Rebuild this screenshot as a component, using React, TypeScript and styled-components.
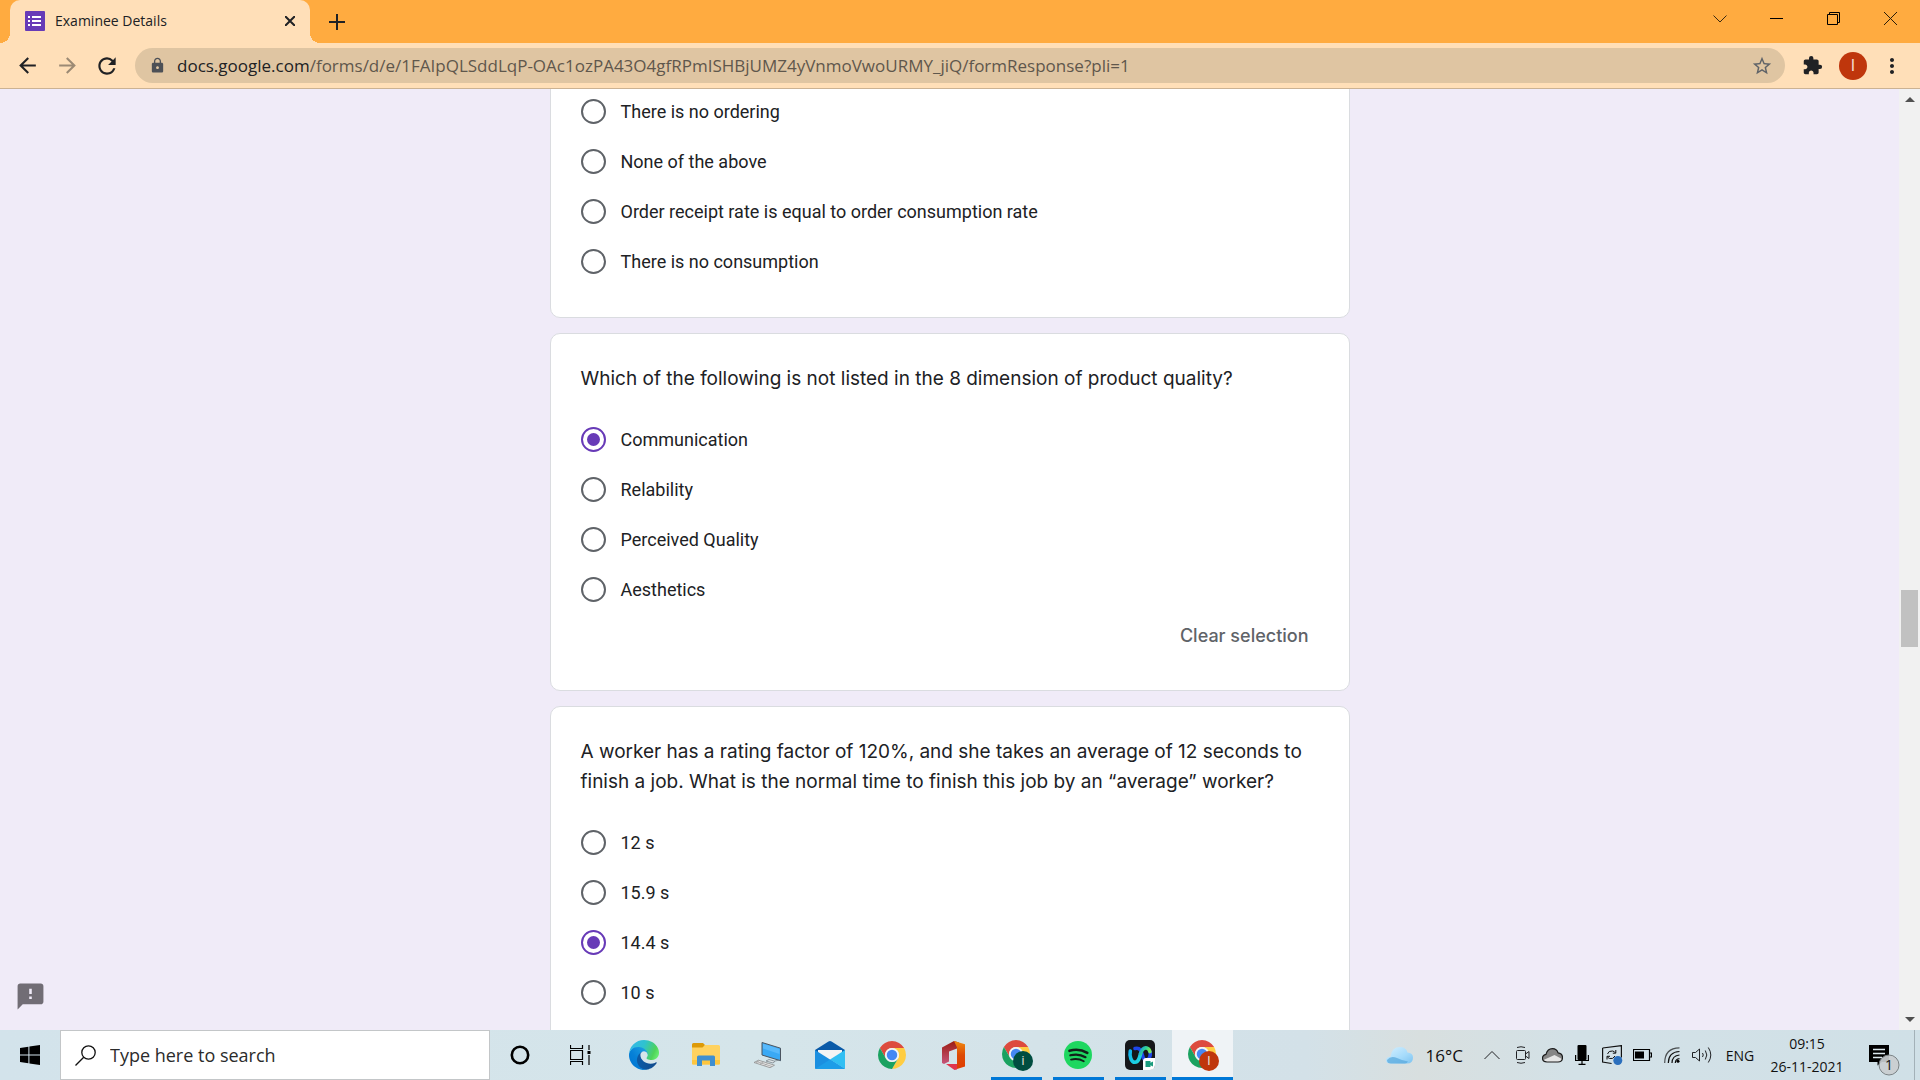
import React, { useState } from "react";
import styled, { createGlobalStyle, css } from "styled-components";
import {
  MdArrowBack,
  MdArrowForward,
  MdExtension,
  MdFeedback,
  MdLock,
  MdMoreVert,
  MdRefresh,
  MdStarBorder,
} from "react-icons/md";

const systemFont = `"Open Sans", "Noto Sans", sans-serif`;
const headingFont = `Inter, "Open Sans", sans-serif`;
const bodyFont = `Roboto, "Liberation Sans", sans-serif`;

const GlobalStyle = createGlobalStyle`
  *, *::before, *::after { box-sizing: border-box; }
  body { margin: 0; font-family: ${systemFont}; color: #202124; overflow: hidden; }
  button { border: 0; padding: 0; background: none; font: inherit; color: inherit; }
  input { font: inherit; color: inherit; margin: 0; }
  svg { display: block; flex: none; }
`;

const Desktop = styled.div`
  height: 100vh;
  display: grid;
  grid-template-rows: auto auto minmax(0, 1fr) auto;
  grid-template-columns: minmax(0, 1fr);
`;

/* Tab strip */

const TabStrip = styled.header`
  display: flex;
  height: 43px;
  padding: 0 1px 0 10px;
  background: #ffab40;
`;

const Tab = styled.div`
  position: relative;
  display: flex;
  align-items: center;
  width: 300px;
  padding: 0 10px 2px 15px;
  gap: 10px;
  border-radius: 10px 10px 0 0;
  background: #ffdfb8;
  font-size: 14px;
  &::before,
  &::after {
    content: "";
    position: absolute;
    bottom: 0;
    width: 10px;
    height: 10px;
  }
  &::before {
    right: 100%;
    background: radial-gradient(circle at 0 0, transparent 10px, #ffdfb8 10px);
  }
  &::after {
    left: 100%;
    background: radial-gradient(circle at 100% 0, transparent 10px, #ffdfb8 10px);
  }
`;

const TabTitle = styled.span`
  flex: 1;
  white-space: nowrap;
`;

const IconButton = styled.button<{ $w: number; $h?: number; $tone?: string }>`
  display: flex;
  align-items: center;
  justify-content: center;
  flex: none;
  width: ${(p) => p.$w}px;
  height: ${(p) => (p.$h ? `${p.$h}px` : "auto")};
  color: ${(p) => p.$tone ?? "#202124"};
`;

const NewTab = styled(IconButton)`
  margin-left: 12px;
`;

const WindowControls = styled.div`
  display: flex;
  margin-left: auto;
`;

/* Toolbar */

const Toolbar = styled.nav`
  display: flex;
  align-items: center;
  height: 46px;
  padding: 0 13px 0 7px;
  background: #ffdfb8;
  border-bottom: 1px solid #cbb293;
`;

const AddressBar = styled.label`
  flex: 1;
  display: flex;
  align-items: center;
  min-width: 0;
  height: 35px;
  margin: 0 7px 0 8px;
  padding: 0 12px 0 14px;
  border-radius: 18px;
  background: #dfc5a2;
  font-size: 17px;
  color: #202124;
`;

const Host = styled.span`
  margin-left: 11px;
`;

const PathInput = styled.input`
  flex: 1;
  min-width: 0;
  padding: 0;
  border: 0;
  outline: 0;
  background: transparent;
  color: #5f574c;
`;

const Avatar = styled.button`
  width: 28px;
  height: 28px;
  margin: 0 10px 0 7px;
  border-radius: 50%;
  background: #bf360c;
  color: #f3d9cf;
  font-family: ${bodyFont};
  font-size: 16px;
`;

/* Page */

const Viewport = styled.div`
  position: relative;
  display: grid;
  grid-template-columns: minmax(0, 1fr) 21px;
  grid-template-rows: minmax(0, 1fr);
  overflow: hidden;
  background: #f0ebf8;
`;

const Form = styled.form`
  display: flex;
  flex-direction: column;
  gap: 15px;
  width: 100%;
  max-width: 800px;
  margin: -33px auto 0;
`;

const Card = styled.section`
  padding: 30px 30px 43px;
  border: 1px solid #dadce0;
  border-radius: 10px;
  background: #fff;
`;

const Question = styled.h2`
  margin: 0 0 33px;
  font: 400 19px/30px ${headingFont};
  color: #202124;
`;

const Options = styled.div<{ $partial?: boolean }>`
  display: grid;
  gap: 25px;
  padding-top: ${(p) => (p.$partial ? 12 : 0)}px;
`;

const Option = styled.label`
  display: flex;
  align-items: center;
  gap: 15px;
  font: 400 18px/25px ${bodyFont};
  color: #202124;
`;

const Radio = styled.input`
  appearance: none;
  flex: none;
  display: grid;
  place-content: center;
  width: 25px;
  height: 25px;
  border: 2px solid #5f6368;
  border-radius: 50%;
  &:checked {
    border-color: #673ab7;
  }
  &:checked::before {
    content: "";
    width: 13px;
    height: 13px;
    border-radius: 50%;
    background: #673ab7;
  }
`;

const ClearRow = styled.div`
  display: flex;
  justify-content: flex-end;
  margin-top: 23px;
`;

const ClearButton = styled.button`
  padding: 0 10px;
  font: 500 18px/22px ${headingFont};
  color: #5f6368;
`;

const ReportButton = styled.button`
  position: absolute;
  left: 15px;
  bottom: 18px;
  color: #716d75;
`;

const Scrollbar = styled.div`
  display: grid;
  grid-template-rows: 21px 480fr 57px 362fr 21px;
  justify-items: center;
  background: #f1f1f1;
`;

const ScrollArrow = styled.button<{ $down?: boolean }>`
  display: flex;
  align-items: center;
  justify-content: center;
  width: 21px;
  &::before {
    content: "";
    border: 5px solid transparent;
    ${(p) =>
      p.$down
        ? css`
            border-top-color: #505050;
            border-bottom-width: 0;
          `
        : css`
            border-bottom-color: #505050;
            border-top-width: 0;
          `}
  }
`;

const ScrollThumb = styled.div`
  grid-row: 3;
  width: 17px;
  background: #c1c1c1;
`;

const LowerArrow = styled(ScrollArrow)`
  grid-row: 5;
`;

/* Taskbar */

const Taskbar = styled.footer`
  display: flex;
  height: 50px;
  background: linear-gradient(
    90deg,
    #d3e3eb 0%,
    #d5e5ea 40%,
    #d3e1e8 68%,
    #d8dfdf 74%,
    #d3e1e7 82%,
    #d0e0e7 100%
  );
  color: #111;
`;

const SearchBox = styled.label`
  display: flex;
  align-items: center;
  gap: 14px;
  width: 430px;
  padding-left: 14px;
  border: 1px solid #c3c6c8;
  background: #fff;
  font-size: 18px;
`;

const SearchInput = styled.input`
  flex: 1;
  min-width: 0;
  padding: 0;
  border: 0;
  outline: 0;
  background: transparent;
  &::placeholder {
    color: #2b2b2b;
    opacity: 1;
  }
`;

const Apps = styled.div`
  display: flex;
  gap: 1px;
  margin-left: 4px;
`;

const AppButton = styled.button<{ $state?: "open" | "active" }>`
  display: flex;
  align-items: center;
  justify-content: center;
  width: 61px;
  border-bottom: 3px solid transparent;
  padding: 3px 1px 0 0;
  ${(p) =>
    p.$state === "open" &&
    css`
      background: linear-gradient(#0078d7, #0078d7) center bottom / 51px 3px no-repeat border-box;
    `}
  ${(p) =>
    p.$state === "active" &&
    css`
      background: #eff3f6;
      border-bottom-color: #0078d7;
    `}
`;

const Tray = styled.div`
  display: flex;
  margin-left: auto;
`;

const Weather = styled.button`
  display: flex;
  align-items: center;
  gap: 13px;
  padding-right: 14px;
  font-size: 17px;
`;

const Language = styled.button`
  width: 46px;
  font-size: 14px;
`;

const Clock = styled.button`
  width: 88px;
  font-size: 14px;
  line-height: 23px;
  padding-bottom: 1px;
`;

const Notifications = styled.button`
  display: flex;
  align-items: center;
  width: 63px;
  padding: 10px 0 0 18px;
`;

const ShowDesktop = styled.button`
  width: 6px;
  border-left: 1px solid #a3b1b8;
`;

/* Drawings */

const FormsIcon = () => (
  <svg width="20" height="20" viewBox="0 0 20 20">
    <rect width="20" height="20" rx="1" fill="#673ab7" />
    <path d="M3 5h2v2H3zm4 0h9v2H7zM3 9h2v2H3zm4 0h9v2H7zm-4 4h2v2H3zm4 0h9v2H7z" fill="#fff" />
  </svg>
);

const Stroke = ({ d, size = 20, width = 1 }: { d: string; size?: number; width?: number }) => (
  <svg width={size} height={size} viewBox={`0 0 ${size} ${size}`} fill="none" stroke="currentColor" strokeWidth={width}>
    <path d={d} />
  </svg>
);

const WindowsLogo = () => (
  <svg width="20" height="20" viewBox="0 0 20 20">
    <path d="M0 3l8.4-1.3v7.8H0zM9.4 1.5L20 0v9.5H9.4zM0 10.5h8.4v7.8L0 17zM9.4 10.5H20V20L9.4 18.5z" fill="#000" />
  </svg>
);

const TaskViewIcon = () => (
  <svg width="21" height="20" viewBox="0 0 21 20" fill="none" stroke="#000">
    <path d="M.5 0v3.500h12V0M.5 20v-3.500h12V20M.5 5.500h12v9H.5zM19 0v5M19 10v10" strokeWidth="1.200" />
    <path d="M17.500 6h3v3h-3z" fill="#000" stroke="none" />
  </svg>
);

const EdgeIcon = () => (
  <svg width="30" height="30" viewBox="0 0 256 256">
    <defs>
      <linearGradient id="edgeA" x1=".2" y1=".6" x2="1" y2=".6">
        <stop offset="0" stopColor="#0c59a4" />
        <stop offset="1" stopColor="#114a8b" />
      </linearGradient>
      <linearGradient id="edgeB" x1=".9" y1=".2" x2=".2" y2=".9">
        <stop offset="0" stopColor="#1b9de2" />
        <stop offset=".6" stopColor="#0680d7" />
        <stop offset="1" stopColor="#0078d4" />
      </linearGradient>
      <linearGradient id="edgeC" x1="0" y1=".3" x2="1" y2=".6">
        <stop offset="0" stopColor="#35b8e8" />
        <stop offset=".45" stopColor="#2fc2cf" />
        <stop offset=".85" stopColor="#4fd35a" />
        <stop offset="1" stopColor="#66eb6e" />
      </linearGradient>
    </defs>
    <path fill="url(#edgeA)" d="M231 190.5c-3.400 1.800-6.900 3.400-10.500 4.700a101.500 101.500 0 01-35.600 6.400c-46.900 0-87.700-32.200-87.700-73.600.1-11.300 6.300-21.700 16.200-27.100-42.400 1.800-53.300 46-53.300 71.900 0 73.200 67.500 80.600 82 80.600 7.800 0 19.600-2.300 26.700-4.500l1.300-.4a128.200 128.200 0 0066.500-52.600 4 4 0 00-5.600-5.400z" />
    <path fill="url(#edgeB)" d="M105.700 241.400a79.200 79.200 0 01-22.700-21.300 80.700 80.700 0 0129.500-120c3.200-1.500 8.500-4.200 15.600-4.100a32.400 32.400 0 0125.700 13 31.900 31.900 0 016.300 18.700c0-.2 24.500-79.600-80-79.600-43.900 0-80 41.600-80 78.200-.2 19.300 4 38.400 12.100 56a128 128 0 00156.300 67.200 75.500 75.500 0 01-62.800-8.100z" />
    <path fill="url(#edgeC)" d="M152.300 148.900c-.8 1-3.300 2.500-3.300 5.700 0 2.600 1.700 5.200 4.800 7.300 14.400 10 41.500 8.700 41.600 8.700 10.700 0 21.100-2.900 30.300-8.300A61.800 61.800 0 00256.100 109c.3-22.400-8-37.300-11.300-43.900C223.500 23.800 177.700 0 128 0A128 128 0 000 126.200c.5-36.500 36.800-66 80-66 3.500 0 23.500.3 42 10.100 16.300 8.600 24.900 18.900 30.800 29.200 6.200 10.700 7.300 24.100 7.300 29.500 0 5.400-2.700 13.300-7.800 19.900z" />
  </svg>
);

const FolderIcon = () => (
  <svg width="28" height="24" viewBox="0 0 28 24">
    <path d="M0 1.500Q0 0 1.500 0H11l2 2-2 4H0z" fill="#dd9a08" />
    <path d="M0 4.500h10.500L13 2h13.500Q28 2 28 3.500v17q0 1-1 1H1q-1 0-1-1z" fill="#ffd260" />
    <path d="M0 17h28v3.500q0 1-1 1H1q-1 0-1-1z" fill="#fdc63f" />
    <path d="M5 23V14q0-1.500 1.500-1.500h15Q23 12.500 23 14v9h-5v-5.500h-8V23z" fill="#3f8fd0" />
  </svg>
);

const ComputerIcon = () => (
  <svg width="28" height="26" viewBox="0 0 28 26">
    <path d="M8 .5l18.500 5.700v12.500L8 13z" fill="#3aa9f5" stroke="#4b5560" strokeWidth="1" />
    <path d="M9 1.800l16.500 5.100v5L9 6.500z" fill="#6cc4ff" opacity=".6" />
    <path d="M15 17.500l6 1.800-2 1.700-7-2zM21 19l5-1" fill="#dfe5e8" stroke="#7b858c" strokeWidth=".8" />
    <path d="M0 20.500l4.500-2.300 16 5-4.500 2.500z" fill="#e6e6e6" stroke="#8d8d8d" strokeWidth=".8" />
    <path d="M2.500 19.500l15.500 5M5 18.800l-3 1.900M9.500 20l-3.500 2M13.500 21.500l-3 2" stroke="#9a9a9a" strokeWidth=".7" />
  </svg>
);

const MailIcon = () => (
  <svg width="30" height="28" viewBox="0 0 30 28">
    <path d="M0 9L13.500.5q1.500-1 3 0L30 9v3H0z" fill="#0a5aa8" />
    <path d="M3 9h24v6L15 20 3 15z" fill="#f4f4f4" />
    <path d="M0 9l30 19H1q-1 0-1-1z" fill="#1b8fe0" />
    <path d="M30 9L15 18.500 30 28z" fill="#31bff3" />
    <path d="M0 28l15-9.500L30 28z" fill="#1d9de8" />
  </svg>
);

const ChromeShape = () => (
  <>
    <path d="M3.220 12A24 24 0 0144.780 12H24A12 12 0 0013.600 30z" fill="#dd4b3e" />
    <path d="M44.780 12A24 24 0 0124 48L34.390 30A12 12 0 0024 12z" fill="#ffcd42" />
    <path d="M24 48A24 24 0 013.220 12L13.600 30A12 12 0 0034.390 30z" fill="#1aa260" />
    <circle cx="24" cy="24" r="12" fill="#f3f3f3" />
    <circle cx="24" cy="24" r="9" fill="#4587f3" />
  </>
);

const ChromeIcon = () => (
  <svg width="28" height="28" viewBox="0 0 48 48">
    <ChromeShape />
  </svg>
);

const ChromeProfileIcon = ({ letter, fill }: { letter: string; fill: string }) => (
  <svg width="34" height="31" viewBox="-3 0 34 31">
    <svg width="28" height="28" viewBox="0 0 48 48">
      <ChromeShape />
    </svg>
    <circle cx="21" cy="21" r="10" fill={fill} />
    <text x="21" y="25" textAnchor="middle" fontFamily="Roboto, sans-serif" fontSize="12" fill="#e8e0dc">
      {letter}
    </text>
  </svg>
);

const OfficeIcon = () => (
  <svg width="24" height="29" viewBox="0 0 24 29">
    <defs>
      <linearGradient id="officeL" x1="0" y1="0" x2="0" y2="1">
        <stop offset="0" stopColor="#9c1c12" />
        <stop offset="1" stopColor="#c6557a" />
      </linearGradient>
      <linearGradient id="officeR" x1="0" y1="0" x2="0" y2="1">
        <stop offset="0" stopColor="#f08a10" />
        <stop offset=".5" stopColor="#dd4a05" />
        <stop offset="1" stopColor="#e03c00" />
      </linearGradient>
    </defs>
    <path d="M0 6.500L12 0l5 1.500-2 6-8 3v10l-5 2.500-2-1z" fill="url(#officeL)" />
    <path d="M12 0l11 3.200V25.500L15 28V6.500z" fill="url(#officeR)" />
    <path d="M4 23h11v5.500L12.500 29z" fill="#e0344c" />
  </svg>
);

const SpotifyIcon = () => (
  <svg width="28" height="28" viewBox="0 0 28 28" fill="none" stroke="#12201a" strokeLinecap="round">
    <circle cx="14" cy="14" r="14" fill="#1ed760" stroke="none" />
    <path d="M5.500 9.800q9.500-2.700 17.800 2" strokeWidth="2.600" />
    <path d="M6.300 14.300q8.500-2.200 15.200 1.900" strokeWidth="2.200" />
    <path d="M7 18.600q7-1.800 12.800 1.700" strokeWidth="1.800" />
  </svg>
);

const WebexIcon = () => (
  <svg width="30" height="30" viewBox="0 0 30 30">
    <defs>
      <linearGradient id="webexL" x1="0" y1="0" x2="1" y2="1">
        <stop offset="0" stopColor="#12b5f0" />
        <stop offset="1" stopColor="#1fd8dc" />
      </linearGradient>
      <linearGradient id="webexR" x1="0" y1="0" x2="1" y2=".4">
        <stop offset="0" stopColor="#1f9fd6" />
        <stop offset=".5" stopColor="#2bd19b" />
        <stop offset="1" stopColor="#7be85a" />
      </linearGradient>
    </defs>
    <rect width="30" height="30" rx="5" fill="#15171a" />
    <g fill="none" strokeWidth="3.600" strokeLinecap="round">
      <path d="M10 8.500c5-1.500 6.500 3 7.500 7 .8 3.300 2.500 6 5 4.500 2.500-1.800 3-5 2.700-8" stroke="#1d46ea" />
      <path d="M5.300 11c-1 5 .8 11.300 4.700 11.300 3.500 0 4.500-4.500 5.500-8.500" stroke="url(#webexL)" />
      <path d="M15.500 13.800c1-4 3.500-6.500 6.200-5.800 1.800.5 2.800 1.800 3.200 3.600" stroke="url(#webexR)" />
    </g>
    <path d="M18 21q0-3 3-3h9v7q0 5-5 5h-7z" fill="#fff" />
    <path d="M20.500 21h5v1.800L28 21.500v5l-2.500-1.200V27h-5z" fill="#1b9c7d" />
  </svg>
);

const CloudWeatherIcon = () => (
  <svg width="27" height="17" viewBox="0 0 27 17">
    <defs>
      <linearGradient id="cloud" x1="0" y1="0" x2="1" y2="1">
        <stop offset="0" stopColor="#d6f0ff" />
        <stop offset=".6" stopColor="#a5dbfb" />
        <stop offset="1" stopColor="#7cc2f0" />
      </linearGradient>
    </defs>
    <path d="M5 16.500q-5 0-5-3.500 0-3 4.500-3.300Q5.500 0 14 0q6 0 7.500 5.500 5.500.5 5.500 5 0 6-6 6z" fill="url(#cloud)" />
    <path d="M1 13q4-5 10-2 5 2.500 11 3.500-1 2-3 2H5q-4 0-4-3.500z" fill="#5aaade" opacity=".75" />
  </svg>
);

const MeetIcon = () => (
  <Stroke size={18} width={1} d="M3.500 5.500q0-1 1-1h7q1 0 1 1v7q0 1-1 1h-7q-1 0-1-1zM12.500 8l3.500-2.500v7L12.500 10M4 1.500q4-1.500 8 0M4 16.500q4 1.500 8 0" />
);

const OneDriveIcon = () => (
  <svg width="21" height="15" viewBox="0 0 21 15">
    <path d="M5 14q-4.500 0-4.500-3.800Q.5 7 4 6.300 5.500.6 10.500.6q4.200 0 5.500 4.200 4.500.5 4.500 4.700Q20.500 14 16 14z" fill="#868686" />
    <path d="M1.500 12L12.500 7l7.500 4q-1 3-4 3H5q-2.500 0-3.500-2z" fill="#e6e6e6" />
    <path d="M5 14q-4.500 0-4.500-3.800Q.5 7 4 6.300 5.500.6 10.500.6q4.200 0 5.500 4.200 4.500.5 4.500 4.700Q20.500 14 16 14z" fill="none" stroke="#1c1c1c" strokeWidth="1.200" />
  </svg>
);

const MicIcon = () => (
  <svg width="14" height="20" viewBox="0 0 14 20">
    <rect x="2.500" width="9" height="15" rx="1" fill="#000" />
    <path d="M.6 10v5.500h12.800V10M7 16v3.500M3.500 19.400h7" fill="none" stroke="#000" strokeWidth="1.200" />
  </svg>
);

const SyncIcon = () => (
  <svg width="21" height="20" viewBox="0 0 21 20" fill="none" stroke="#111">
    <path d="M.6 3L19.400.6v12M.6 3v14l9 1.500" strokeWidth="1.200" />
    <path d="M5.500 9q1-3.500 5-3 2 .3 3 2M13.800 5v3.200h-3M13 11q-2 3.500-5.500 2.500-1.500-.5-2.200-2M5 14.500v-3.200h3" />
    <circle cx="15.800" cy="15.500" r="4.500" fill="#2b6fbd" stroke="none" />
  </svg>
);

const BatteryIcon = () => (
  <svg width="19" height="12" viewBox="0 0 19 12">
    <path d="M.5.5h16v11H.5zM17 4h1.500v4H17" fill="none" stroke="#000" strokeWidth="1.200" />
    <path d="M2 2.500h9v7H2z" fill="#000" />
  </svg>
);

const WifiIcon = () => (
  <svg width="16" height="16" viewBox="0 0 16 16" fill="none" stroke="#111" strokeWidth="1.200">
    <path d="M.7 16Q.7 1 15.500.8" opacity=".7" />
    <path d="M4.300 16Q4.500 5 15.500 4.500M8 16q.2-7.500 7.500-8M11.300 16q.2-4 4.200-4.300" />
    <circle cx="14" cy="14.300" r="1.500" fill="#000" stroke="none" />
  </svg>
);

const SpeakerIcon = () => (
  <Stroke size={20} d="M.5 7.500h3l4-3.500v12l-4-3.500h-3zM10.500 8q1.500 2 0 4M13.300 5.500q3 4.500 0 9M16.300 2.500q5 7.500 0 15" />
);

const NotificationIcon = () => (
  <svg width="31" height="31" viewBox="0 0 31 31">
    <path d="M0 0h20v17h-7l-4.500 3.500V17H0z" fill="#000" />
    <path d="M4 4.500h12M4 8.500h12M4 12.500h9" stroke="#dce8ed" strokeWidth="1.300" />
    <circle cx="20" cy="20" r="10" fill="#c9cdd0" fillOpacity=".92" stroke="#7c8386" />
    <text x="20" y="25" textAnchor="middle" fontFamily="Open Sans, sans-serif" fontSize="14" fill="#111">
      1
    </text>
  </svg>
);

/* Questions */

type QuestionData = { id: string; title?: string; options: string[]; answer?: number; clearable?: boolean };

const questions: QuestionData[] = [
  {
    id: "ordering",
    options: [
      "There is no ordering",
      "None of the above",
      "Order receipt rate is equal to order consumption rate",
      "There is no consumption",
    ],
  },
  {
    id: "quality",
    title: "Which of the following is not listed in the 8 dimension of product quality?",
    options: ["Communication", "Relability", "Perceived Quality", "Aesthetics"],
    answer: 0,
    clearable: true,
  },
  {
    id: "rating",
    title:
      "A worker has a rating factor of 120%, and she takes an average of 12 seconds to finish a job. What is the normal time to finish this job by an “average” worker?",
    options: ["12 s", "15.9 s", "14.4 s", "10 s"],
    answer: 2,
  },
];

function QuestionCard({ data }: { data: QuestionData }) {
  const [selected, setSelected] = useState<number | undefined>(data.answer);
  return (
    <Card>
      {data.title && <Question id={`${data.id}-title`}>{data.title}</Question>}
      <Options role="radiogroup" aria-labelledby={data.title ? `${data.id}-title` : undefined} $partial={!data.title}>
        {data.options.map((label, i) => (
          <Option key={label}>
            <Radio type="radio" name={data.id} checked={selected === i} onChange={() => setSelected(i)} />
            {label}
          </Option>
        ))}
      </Options>
      {data.clearable && (
        <ClearRow>
          <ClearButton type="button" onClick={() => setSelected(undefined)}>
            Clear selection
          </ClearButton>
        </ClearRow>
      )}
    </Card>
  );
}

export default function App() {
  return (
    <Desktop>
      <GlobalStyle />
      <TabStrip>
        <Tab>
          <FormsIcon />
          <TabTitle>Examinee Details</TabTitle>
          <IconButton $w={20} $h={20} aria-label="Close tab">
            <Stroke size={10} width={2} d="M0 0L10 10M10 0L0 10" />
          </IconButton>
        </Tab>
        <NewTab $w={30} $h={43} aria-label="New tab">
          <Stroke size={16} width={2} d="M8 0v16M0 8h16" />
        </NewTab>
        <WindowControls>
          <IconButton $w={57} $h={37} $tone="#3a2a12" aria-label="Search tabs">
            <Stroke size={14} d="M.5 3.500L7 10 13.500 3.500" />
          </IconButton>
          <IconButton $w={57} $h={37} $tone="#000" aria-label="Minimize">
            <Stroke size={13} d="M0 6.500h13" />
          </IconButton>
          <IconButton $w={57} $h={37} $tone="#000" aria-label="Restore">
            <Stroke size={13} d="M.5 2.500h10v10H.5zM2.500 2.500v-2h10v10h-2" />
          </IconButton>
          <IconButton $w={57} $h={37} $tone="#2a1d0a" aria-label="Close">
            <Stroke size={13} d="M0 0L13 13M13 0L0 13" />
          </IconButton>
        </WindowControls>
      </TabStrip>

      <Toolbar>
        <IconButton $w={40} aria-label="Back">
          <MdArrowBack size={25} />
        </IconButton>
        <IconButton $w={40} $tone="#9c8a74" aria-label="Forward">
          <MdArrowForward size={25} />
        </IconButton>
        <IconButton $w={40} aria-label="Reload">
          <MdRefresh size={26} />
        </IconButton>
        <AddressBar>
          <MdLock size={17} color="#4d5056" />
          <Host>docs.google.com</Host>
          <PathInput
            aria-label="Address"
            defaultValue="/forms/d/e/1FAIpQLSddLqP-OAc1ozPA43O4gfRPmISHBjUMZ4yVnmoVwoURMY_jiQ/formResponse?pli=1"
          />
          <MdStarBorder size={22} color="#5f6368" />
        </AddressBar>
        <IconButton $w={40} aria-label="Extensions">
          <MdExtension size={21} />
        </IconButton>
        <Avatar aria-label="Profile">I</Avatar>
        <IconButton $w={30} aria-label="Menu">
          <MdMoreVert size={24} />
        </IconButton>
      </Toolbar>

      <Viewport>
        <main>
          <Form>
            {questions.map((q) => (
              <QuestionCard key={q.id} data={q} />
            ))}
          </Form>
          <ReportButton aria-label="Report a problem">
            <MdFeedback size={31} />
          </ReportButton>
        </main>
        <Scrollbar>
          <ScrollArrow aria-label="Scroll up" />
          <ScrollThumb />
          <LowerArrow $down aria-label="Scroll down" />
        </Scrollbar>
      </Viewport>

      <Taskbar>
        <IconButton $w={60} aria-label="Start">
          <WindowsLogo />
        </IconButton>
        <SearchBox>
          <svg width="21" height="21" viewBox="0 0 21 21" fill="none" stroke="#111" strokeWidth="1.300">
            <circle cx="13.500" cy="7.500" r="6.700" />
            <path d="M8.700 12.300L.5 20.500" />
          </svg>
          <SearchInput type="text" placeholder="Type here to search" aria-label="Search" />
        </SearchBox>
        <IconButton $w={60} aria-label="Cortana">
          <svg width="20" height="20" viewBox="0 0 20 20" fill="none" stroke="#000" strokeWidth="2.600">
            <circle cx="10" cy="10" r="8.200" />
          </svg>
        </IconButton>
        <IconButton $w={60} aria-label="Task view">
          <TaskViewIcon />
        </IconButton>
        <Apps>
          <AppButton aria-label="Edge"><EdgeIcon /></AppButton>
          <AppButton aria-label="File Explorer"><FolderIcon /></AppButton>
          <AppButton aria-label="This PC"><ComputerIcon /></AppButton>
          <AppButton aria-label="Mail"><MailIcon /></AppButton>
          <AppButton aria-label="Chrome"><ChromeIcon /></AppButton>
          <AppButton aria-label="Office"><OfficeIcon /></AppButton>
          <AppButton $state="open" aria-label="Chrome, profile i">
            <ChromeProfileIcon letter="i" fill="#004d40" />
          </AppButton>
          <AppButton $state="open" aria-label="Spotify"><SpotifyIcon /></AppButton>
          <AppButton $state="open" aria-label="Webex"><WebexIcon /></AppButton>
          <AppButton $state="active" aria-label="Chrome, profile I">
            <ChromeProfileIcon letter="I" fill="#bf360c" />
          </AppButton>
        </Apps>
        <Tray>
          <Weather>
            <CloudWeatherIcon />
            16°C
          </Weather>
          <IconButton $w={30} aria-label="Hidden icons">
            <Stroke size={16} width={1} d="M.5 12L8 4.500 15.500 12" />
          </IconButton>
          <IconButton $w={30} aria-label="Meet Now"><MeetIcon /></IconButton>
          <IconButton $w={30} aria-label="OneDrive"><OneDriveIcon /></IconButton>
          <IconButton $w={30} aria-label="Microphone"><MicIcon /></IconButton>
          <IconButton $w={30} aria-label="Updates"><SyncIcon /></IconButton>
          <IconButton $w={30} aria-label="Battery"><BatteryIcon /></IconButton>
          <IconButton $w={30} aria-label="Wi-Fi"><WifiIcon /></IconButton>
          <IconButton $w={30} aria-label="Volume"><SpeakerIcon /></IconButton>
          <Language>ENG</Language>
          <Clock>
            <div>09:15</div>
            <div>26-11-2021</div>
          </Clock>
          <Notifications aria-label="Notifications"><NotificationIcon /></Notifications>
          <ShowDesktop aria-label="Show desktop" />
        </Tray>
      </Taskbar>
    </Desktop>
  );
}
